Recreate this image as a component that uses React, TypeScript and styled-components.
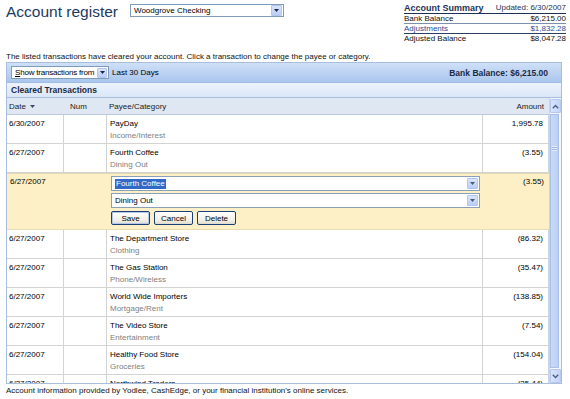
import React from 'react';
import styled, { createGlobalStyle } from 'styled-components';

const GlobalStyle = createGlobalStyle`
  html, body {
    margin: 0;
    padding: 0;
    background: #ffffff;
  }
  body {
    font-family: "Liberation Sans", Arial, sans-serif;
    font-size: 8px;
    color: #000000;
  }
  #root {
    width: 570px;
    height: 399px;
    overflow: hidden;
  }
`;

const Page = styled.div`
  display: flex;
  flex-direction: column;
  padding: 0 4px 0 6px;
  width: 570px;
  height: 399px;
  box-sizing: border-box;
`;

const TopBar = styled.div`
  display: flex;
  justify-content: space-between;
  align-items: flex-start;
  height: 50px;
`;

const TitleGroup = styled.div`
  display: flex;
  align-items: flex-start;
  gap: 12px;
  padding-top: 4px;
`;

const Title = styled.h1`
  margin: 0;
  font-family: "Liberation Sans", Arial, sans-serif;
  font-size: 15.5px;
  font-weight: normal;
  line-height: 15px;
  color: #22395e;
`;

const SelectBox = styled.div<{ $width: number }>`
  display: flex;
  align-items: center;
  justify-content: space-between;
  width: ${({ $width }) => $width}px;
  height: 13px;
  box-sizing: border-box;
  border: 1px solid #7f9db9;
  background: #ffffff;
  padding: 0 1px 0 3px;
  font-size: 8px;
  color: #000;
  white-space: nowrap;
  overflow: hidden;
  flex-shrink: 0;
`;

const SelectText = styled.span<{ $tight?: boolean }>`
  letter-spacing: ${({ $tight }) => ($tight ? '-0.2px' : '0')};
`;

const ArrowButton = styled.div<{ $size?: number }>`
  display: flex;
  align-items: center;
  justify-content: center;
  width: ${({ $size }) => $size ?? 11}px;
  height: ${({ $size }) => $size ?? 11}px;
  box-sizing: border-box;
  border: 1px solid #b3c6ef;
  border-radius: 1px;
  background: linear-gradient(#d9e5fd, #b9cdf7);
  flex-shrink: 0;
`;

const Summary = styled.div`
  width: 162px;
  margin-top: 3px;
  display: flex;
  flex-direction: column;
`;

const SummaryHead = styled.div`
  display: flex;
  justify-content: space-between;
  align-items: flex-end;
  height: 10px;
  border-bottom: 1.5px solid #1e3256;
  color: #1e3256;
  line-height: 10px;
`;

const SummaryTitle = styled.span`
  font-weight: bold;
  font-size: 9px;
`;

const SummaryRow = styled.div<{ $tone?: 'blue'; $line?: string }>`
  display: flex;
  justify-content: space-between;
  height: 9px;
  line-height: 10px;
  border-bottom: 1px solid ${({ $line }) => $line ?? 'transparent'};
  color: ${({ $tone }) => ($tone === 'blue' ? '#2a4b98' : '#111')};
`;

const Intro = styled.div`
  height: 10px;
  line-height: 10px;
  margin-top: 2px;
  color: #111;
`;

const Panel = styled.div`
  width: 556px;
  height: 322px;
  box-sizing: border-box;
  border: 1px solid #a7bedc;
  display: flex;
  flex-direction: column;
  overflow: hidden;
`;

const Toolbar = styled.div`
  display: flex;
  align-items: center;
  height: 19px;
  padding: 0 13px 0 4px;
  gap: 3px;
  background: linear-gradient(#cfe0f7, #aac6ee);
  border-bottom: 1px solid #9fbbe2;
  flex-shrink: 0;
`;

const ToolbarLabel = styled.span`
  color: #000;
`;

const BankBalance = styled.span`
  margin-left: auto;
  font-weight: bold;
  font-size: 8.5px;
  color: #1a2a44;
`;

const Caption = styled.div`
  display: flex;
  align-items: center;
  height: 14px;
  padding-left: 4px;
  font-weight: bold;
  font-size: 8.5px;
  color: #1a2a44;
  background: linear-gradient(#edf3fc, #dae6f7);
  border-bottom: 1px solid #a9bfdf;
  flex-shrink: 0;
`;

const Body = styled.div`
  display: flex;
  flex: 1;
  min-height: 0;
  overflow: hidden;
`;

const Grid = styled.div`
  width: 542px;
  display: flex;
  flex-direction: column;
  overflow: hidden;
`;

const columns = '57px 43px 376px 66px';

const HeadRow = styled.div`
  display: grid;
  grid-template-columns: ${columns};
  height: 16px;
  align-items: center;
  background: #dfe7f3;
  border-bottom: 1px solid #b9c9df;
  color: #222;
  flex-shrink: 0;
`;

const HeadCell = styled.div<{ $pad?: number; $right?: boolean }>`
  padding-left: ${({ $pad }) => $pad ?? 0}px;
  padding-right: ${({ $right }) => ($right ? 5 : 0)}px;
  display: flex;
  align-items: center;
  justify-content: ${({ $right }) => ($right ? 'flex-end' : 'flex-start')};
  gap: 4px;
`;

const Row = styled.div`
  display: grid;
  grid-template-columns: ${columns};
  height: 29px;
  box-sizing: border-box;
  border-bottom: 1px solid #d3d3d3;
  flex-shrink: 0;
`;

const Cell = styled.div<{ $pad?: number; $right?: boolean; $last?: boolean }>`
  padding: 3px ${({ $right }) => ($right ? 5 : 0)}px 0 ${({ $pad }) => $pad ?? 0}px;
  text-align: ${({ $right }) => ($right ? 'right' : 'left')};
  border-right: 1px solid ${({ $last }) => ($last ? '#c9d4e4' : '#d3d3d3')};
  line-height: 12px;
  overflow: hidden;
  white-space: nowrap;
`;

const Category = styled.div`
  color: #808080;
`;

const EditRow = styled.div`
  display: grid;
  grid-template-columns: ${columns};
  height: 57px;
  box-sizing: border-box;
  background: #fdf0c6;
  border-top: 1px solid #e2d7b2;
  border-bottom: 1px solid #e6dcb8;
  flex-shrink: 0;
`;

const EditCell = styled.div<{ $pad?: number; $right?: boolean }>`
  padding: 2px ${({ $right }) => ($right ? 5 : 0)}px 0 ${({ $pad }) => $pad ?? 0}px;
  text-align: ${({ $right }) => ($right ? 'right' : 'left')};
  line-height: 12px;
`;

const EditFields = styled.div`
  display: flex;
  flex-direction: column;
  gap: 2px;
  padding: 2px 0 0 4px;
`;

const EditInput = styled.div`
  display: flex;
  align-items: center;
  justify-content: space-between;
  width: 369px;
  height: 15px;
  box-sizing: border-box;
  border: 1px solid #8aa0b8;
  background: #fff;
  padding: 0 1px 0 3px;
`;

const Selected = styled.span`
  background: #3169c6;
  color: #fff;
  padding: 0 1px;
  line-height: 10px;
`;

const Buttons = styled.div`
  display: flex;
  gap: 4px;
  margin-top: 1px;
`;

const Button = styled.button<{ $default?: boolean }>`
  height: 14px;
  width: 39px;
  padding: 0;
  font-family: "Liberation Sans", Arial, sans-serif;
  font-size: 8px;
  color: #000;
  border: 1px solid #1c3f76;
  border-radius: 2px;
  background: linear-gradient(#ffffff, #f1efe6 70%, #dedbcd);
  box-shadow: ${({ $default }) => ($default ? 'inset 0 0 0 1px #b4c8ee' : 'none')};
`;

const ScrollBar = styled.div`
  width: 12px;
  display: flex;
  flex-direction: column;
  align-items: center;
  background: #f4f6fa;
  border-left: 1px solid #c9d4e4;
  box-sizing: border-box;
`;

const ScrollButton = styled.div`
  width: 11px;
  height: 14px;
  margin-top: 1px;
  box-sizing: border-box;
  display: flex;
  align-items: center;
  justify-content: center;
  border: 1px solid #b6c8ee;
  border-radius: 1px;
  background: linear-gradient(90deg, #d8e4fc, #c2d4f8);
  flex-shrink: 0;
`;

const Thumb = styled.div`
  flex: 1;
  width: 9px;
  margin: 1px 1px 0 0;
  align-self: flex-start;
  box-sizing: border-box;
  border: 1px solid #a9c0e8;
  background: linear-gradient(90deg, #c9daf7, #bcd0f4);
  display: flex;
  align-items: center;
  justify-content: center;
`;

const Grip = styled.div`
  width: 5px;
  height: 5px;
  background: repeating-linear-gradient(#e6eefc 0 1px, #9db6e2 1px 2px);
  margin-bottom: 185px;
`;

const Footer = styled.div`
  margin-top: 2px;
  line-height: 10px;
  color: #111;
`;

const Chevron = ({ up }: { up?: boolean }) => (
  <svg width="7" height="5" viewBox="0 0 7 5">
    <path
      d={up ? 'M0.8 4.2 L3.5 1.4 L6.2 4.2' : 'M0.8 0.8 L3.5 3.6 L6.2 0.8'}
      fill="none"
      stroke="#4d6185"
      strokeWidth="1.4"
    />
  </svg>
);

const Triangle = ({ color = '#1b2a44' }: { color?: string }) => (
  <svg width="5" height="3" viewBox="0 0 5 3">
    <path d="M0 0 H5 L2.5 3 Z" fill={color} />
  </svg>
);

interface Tx {
  date: string;
  payee: string;
  category?: string;
  amount: string;
}

const before: Tx[] = [
  { date: '6/30/2007', payee: 'PayDay', category: 'Income/Interest', amount: '1,995.78' },
  { date: '6/27/2007', payee: 'Fourth Coffee', category: 'Dining Out', amount: '(3.55)' },
];

const after: Tx[] = [
  { date: '6/27/2007', payee: 'The Department Store', category: 'Clothing', amount: '(86.32)' },
  { date: '6/27/2007', payee: 'The Gas Station', category: 'Phone/Wireless', amount: '(35.47)' },
  { date: '6/27/2007', payee: 'World Wide Importers', category: 'Mortgage/Rent', amount: '(138.85)' },
  { date: '6/27/2007', payee: 'The Video Store', category: 'Entertainment', amount: '(7.54)' },
  { date: '6/27/2007', payee: 'Healthy Food Store', category: 'Groceries', amount: '(154.04)' },
  { date: '6/27/2007', payee: 'Northwind Traders', amount: '(25.44)' },
];

const TxRow = ({ tx }: { tx: Tx }) => (
  <Row>
    <Cell $pad={2}>{tx.date}</Cell>
    <Cell />
    <Cell $pad={3}>
      <div>{tx.payee}</div>
      {tx.category && <Category>{tx.category}</Category>}
    </Cell>
    <Cell $right $last>
      {tx.amount}
    </Cell>
  </Row>
);

const App = () => {
  return (
    <>
      <GlobalStyle />
      <Page>
        <TopBar>
          <TitleGroup>
            <Title>Account register</Title>
            <SelectBox $width={154}>
              <SelectText>Woodgrove Checking</SelectText>
              <ArrowButton>
                <Triangle />
              </ArrowButton>
            </SelectBox>
          </TitleGroup>
          <Summary>
            <SummaryHead>
              <SummaryTitle>Account Summary</SummaryTitle>
              <span>Updated: 6/30/2007</span>
            </SummaryHead>
            <SummaryRow $line="#7d8fb0">
              <span>Bank Balance</span>
              <span>$6,215.00</span>
            </SummaryRow>
            <SummaryRow $tone="blue" $line="#2b3f62">
              <span>Adjustments</span>
              <span>$1,832.28</span>
            </SummaryRow>
            <SummaryRow>
              <span>Adjusted Balance</span>
              <span>$8,047.28</span>
            </SummaryRow>
          </Summary>
        </TopBar>

        <Intro>
          The listed transactions have cleared your account. Click a transaction to change the payee or category.
        </Intro>

        <Panel>
          <Toolbar>
            <SelectBox $width={98}>
              <SelectText $tight>
                <u>S</u>how transactions from
              </SelectText>
              <ArrowButton $size={10}>
                <Triangle />
              </ArrowButton>
            </SelectBox>
            <ToolbarLabel>Last 30 Days</ToolbarLabel>
            <BankBalance>Bank Balance: $6,215.00</BankBalance>
          </Toolbar>
          <Caption>Cleared Transactions</Caption>
          <Body>
            <Grid>
              <HeadRow>
                <HeadCell $pad={2}>
                  Date <Triangle color="#3a4a66" />
                </HeadCell>
                <HeadCell $pad={6}>Num</HeadCell>
                <HeadCell $pad={2}>Payee/Category</HeadCell>
                <HeadCell $right>Amount</HeadCell>
              </HeadRow>
              {before.map((tx, i) => (
                <TxRow key={`b${i}`} tx={tx} />
              ))}
              <EditRow>
                <EditCell $pad={3}>6/27/2007</EditCell>
                <EditCell />
                <EditFields>
                  <EditInput>
                    <Selected>Fourth Coffee</Selected>
                    <ArrowButton>
                      <Triangle color="#4a5a78" />
                    </ArrowButton>
                  </EditInput>
                  <EditInput>
                    <span>Dining Out</span>
                    <ArrowButton>
                      <Triangle color="#4a5a78" />
                    </ArrowButton>
                  </EditInput>
                  <Buttons>
                    <Button $default>Save</Button>
                    <Button>Cancel</Button>
                    <Button>Delete</Button>
                  </Buttons>
                </EditFields>
                <EditCell $right>(3.55)</EditCell>
              </EditRow>
              {after.map((tx, i) => (
                <TxRow key={`a${i}`} tx={tx} />
              ))}
            </Grid>
            <ScrollBar>
              <ScrollButton>
                <Chevron up />
              </ScrollButton>
              <Thumb>
                <Grip />
              </Thumb>
              <ScrollButton>
                <Chevron />
              </ScrollButton>
            </ScrollBar>
          </Body>
        </Panel>

        <Footer>
          Account information provided by Yodlee, CashEdge, or your financial institution's online services.
        </Footer>
      </Page>
    </>
  );
};

export default App;
